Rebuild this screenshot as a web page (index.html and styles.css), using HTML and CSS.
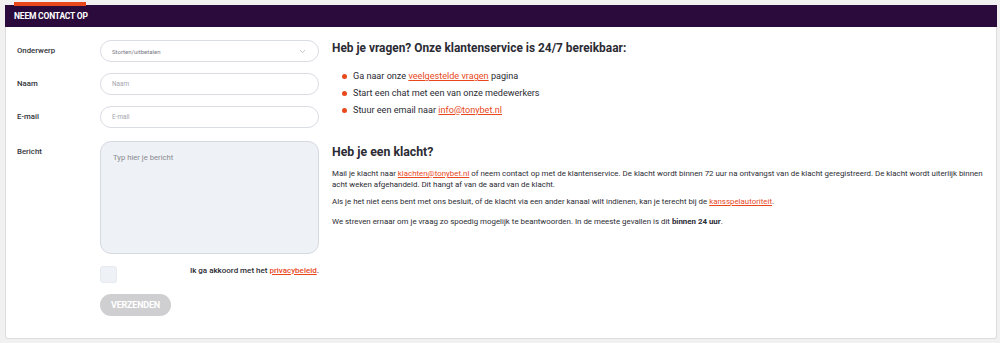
FILE: index.html
```html
<!DOCTYPE html>
<html lang="nl">
<head>
<meta charset="utf-8">
<title>Neem contact op</title>
<link rel="stylesheet" href="styles.css">
</head>
<body>
<div class="card">
  <div class="card-head"><span class="card-title">NEEM CONTACT OP</span></div>
  <div class="card-body">
    <form class="form">
      <div class="row">
        <label class="label">Onderwerp</label>
        <div class="field select">
          <span class="value">Storten/uitbetalen</span>
          <svg class="chev" width="7" height="5" viewBox="0 0 7 5"><path d="M1 1.2 L3.5 3.6 L6 1.2" fill="none" stroke="#b8b8c0" stroke-width="0.9"/></svg>
        </div>
      </div>
      <div class="row">
        <label class="label">Naam</label>
        <div class="field"><span class="ph">Naam</span></div>
      </div>
      <div class="row">
        <label class="label">E-mail</label>
        <div class="field"><span class="ph">E-mail</span></div>
      </div>
      <div class="row row-msg">
        <label class="label">Bericht</label>
        <div class="textarea"><span class="ph-area">Typ hier je bericht</span></div>
      </div>
      <div class="row row-check">
        <span class="checkbox"></span>
        <span class="agree">Ik ga akkoord met het <a class="link" href="#">privacybeleid</a>.</span>
      </div>
      <div class="row row-btn">
        <span class="btn">VERZENDEN</span>
      </div>
    </form>
    <div class="info">
      <h2 class="h">Heb je vragen? Onze klantenservice is 24/7 bereikbaar:</h2>
      <ul class="list">
        <li>Ga naar onze <a class="link" href="#">veelgestelde vragen</a> pagina</li>
        <li>Start een chat met een van onze medewerkers</li>
        <li>Stuur een email naar <a class="link" href="#">info@tonybet.nl</a></li>
      </ul>
      <h2 class="h h2">Heb je een klacht?</h2>
      <p class="p p1">Mail je klacht naar <a class="link" href="#">klachten@tonybet.nl</a> of neem contact op met de klantenservice. De klacht wordt binnen 72 uur na ontvangst van de klacht geregistreerd. De klacht wordt uiterlijk binnen acht weken afgehandeld. Dit hangt af van de aard van de klacht.</p>
      <p class="p p2">Als je het niet eens bent met ons besluit, of de klacht via een ander kanaal wilt indienen, kan je terecht bij de <a class="link" href="#">kansspelautoriteit</a>.</p>
      <p class="p p3">We streven ernaar om je vraag zo spoedig mogelijk te beantwoorden. In de meeste gevallen is dit <b>binnen 24 uur</b>.</p>
    </div>
  </div>
</div>
</body>
</html>
```
FILE: styles.css
```css
* { box-sizing: border-box; }
html, body { margin: 0; }
body {
  background: #f1f1f1;
  padding: 5px 3px 4px 5px;
  font-family: Roboto, "Liberation Sans", sans-serif;
  color: #2b2b33;
  height: 343px;
}
.card {
  background: #fff;
  border: 1px solid #dcdcdc;
  border-top: none;
  border-radius: 0 0 3px 3px;
  height: 334px;
}
.card-head {
  position: relative;
  background: #2a0b3c;
  height: 22px;
  display: flex;
  align-items: center;
  padding-left: 9px;
  margin: 0 -1px;
}
.card-head::before {
  content: "";
  position: absolute;
  left: 9px;
  top: -3px;
  width: 72px;
  height: 4px;
  background: #e8481c;
}
.card-title {
  color: #fff;
  font-weight: 700;
  font-size: 8.5px;
  letter-spacing: -0.2px;
}
.card-body {
  display: flex;
  padding: 13px 0 0 11px;
}
.form {
  width: 302px;
  flex: none;
  display: flex;
  flex-direction: column;
}
.row { display: flex; align-items: flex-start; margin-bottom: 11px; }
.label {
  width: 83px;
  flex: none;
  font-size: 7.8px;
  font-weight: 500;
  line-height: 22px;
  color: #33333b;
}
.field {
  flex: 1;
  height: 22px;
  border: 1px solid #d9dce3;
  border-radius: 11px;
  display: flex;
  align-items: center;
  padding: 0 11px;
  font-size: 6.4px;
}
.select { justify-content: space-between; }
.value { color: #7a7a88; font-size: 6px; }
.ph { color: #a5a5ad; }
.chev { margin-right: 1px; }
.row-msg { margin-top: 2px; }
.textarea {
  flex: 1;
  height: 113px;
  border: 1px solid #d5dae2;
  border-radius: 11px;
  background: #eef1f5;
  padding: 3px 12px;
}
.ph-area { font-size: 7.7px; color: #8a8a92; }
.row-check {
  margin-left: 83px;
  justify-content: space-between;
  align-items: center;
  margin-bottom: 11px;
}
.checkbox {
  width: 17px;
  height: 17px;
  border-radius: 3px;
  background: #eef1f5;
  border: 1px solid #e6e9ee;
  margin-top: 1px;
}
.agree { font-size: 8px; font-weight: 500; margin-top: -8px; }
.link { color: #e8481c; text-decoration: underline; }
.row-btn { margin-left: 83px; }
.btn {
  width: 71px;
  height: 22px;
  border-radius: 11px;
  background: #cfcfd1;
  color: #fff;
  font-weight: 700;
  font-size: 9px;
  display: flex;
  align-items: center;
  justify-content: center;
  letter-spacing: -0.2px;
}
.info {
  flex: 1;
  padding-left: 13px;
  padding-right: 0;
}
.h {
  margin: 1px 0 0;
  font-size: 11.9px;
  font-weight: 700;
  line-height: 14px;
  color: #2b2b33;
}
.list {
  list-style: none;
  margin: 13px 0 0;
  padding: 0 0 0 21px;
  font-size: 9.1px;
}
.list li {
  position: relative;
  line-height: 17px;
}
.list li::before {
  content: "";
  position: absolute;
  left: -11px;
  top: 6px;
  width: 5px;
  height: 5px;
  border-radius: 50%;
  background: #e8481c;
}
.h2 { margin-top: 26px; font-size: 12.3px; }
.p {
  margin: 0;
  font-size: 7.9px;
  line-height: 11px;
}
.p1 { margin-top: 9px; }
.p2 { margin-top: 6px; }
.p3 { margin-top: 9px; }
.p b { font-weight: 700; }
```
